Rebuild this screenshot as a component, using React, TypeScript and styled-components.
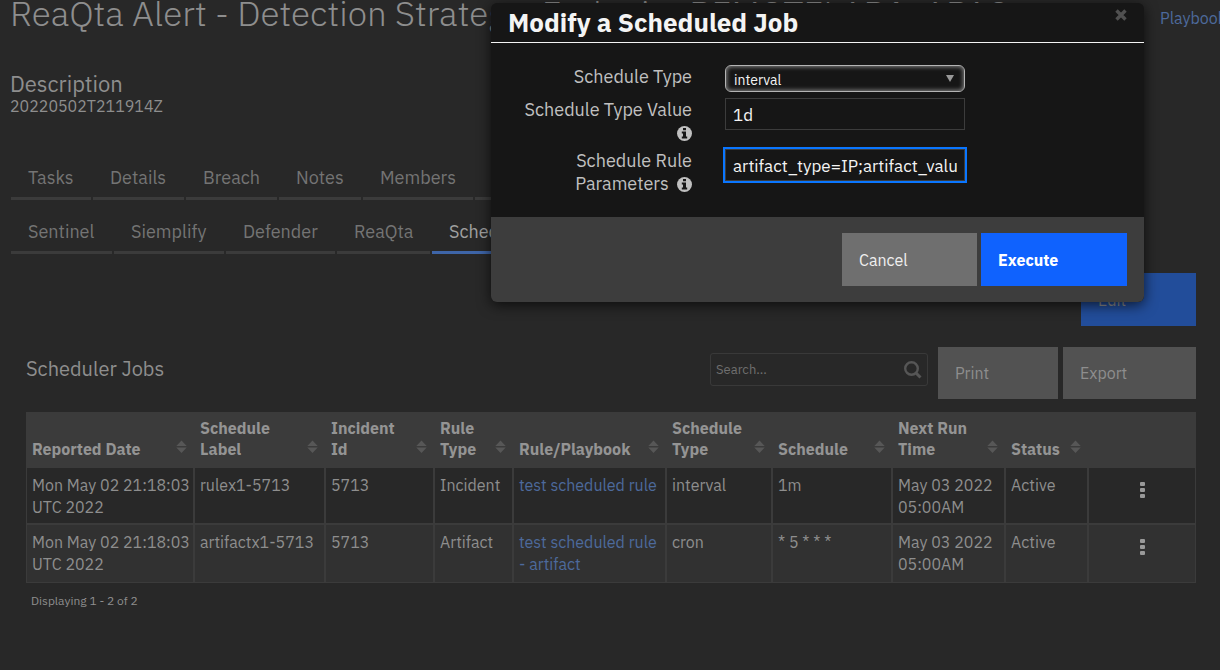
import React, { useState } from "react";
import styled, { createGlobalStyle } from "styled-components";

const GlobalStyle = createGlobalStyle`
  *, *::before, *::after { box-sizing: border-box; }
  html { background: #282828; }
  body {
    margin: 0;
    background: #282828;
    color: #8e8e8e;
    font-family: "IBM Plex Sans", "Noto Sans", "Liberation Sans", sans-serif;
    font-size: 16px;
    line-height: 21px;
  }
  button, input, select { font-family: inherit; }
  h1, h2, h3, p { margin: 0; }
`;

const Page = styled.div`
  position: relative;
  min-height: 100vh;
  overflow: hidden;
`;

const TopBar = styled.header`
  display: flex;
  align-items: flex-start;
  justify-content: space-between;
  gap: 16px;
  height: 72px;
  padding-left: 10px;
  white-space: nowrap;
`;

const Title = styled.h1`
  font-weight: 300;
  font-size: 35px;
  line-height: 26px;
`;

const Link = styled.a`
  color: #4d6a9c;
  text-decoration: none;
`;

const TopLink = styled(Link)`
  flex: none;
  width: 60px;
  padding-top: 8px;
`;

const Description = styled.section`
  padding: 0 10px;
`;

const DescriptionTitle = styled.h2`
  font-weight: 400;
  font-size: 22px;
  line-height: 24px;
`;

const Tabs = styled.nav`
  display: flex;
  gap: 2px;
  padding-left: 11px;
  white-space: nowrap;
`;

const PrimaryTabs = styled(Tabs)`
  margin-top: 41px;
`;

const Tab = styled.button<{ $width: number; $active?: boolean }>`
  flex: none;
  width: ${(p) => p.$width}px;
  height: 42px;
  padding: 0 17px;
  border: 0;
  border-bottom: 3px solid ${(p) => (p.$active ? "#3e65a8" : "#3b3b3b")};
  background: none;
  color: ${(p) => (p.$active ? "#a0a0a0" : "#747474")};
  font-size: 18px;
  line-height: 24px;
  text-align: left;
`;

const SecondaryTabs = styled(Tabs)`
  margin-top: 12px;
`;

const Content = styled.main`
  padding: 19px 24px 0 26px;
`;

const Actions = styled.div`
  display: flex;
  justify-content: flex-end;
`;

const Button = styled.button<{ $width: number; $tone: "edit" | "muted" | "grey" | "blue" }>`
  width: ${(p) => p.$width}px;
  height: ${(p) => (p.$tone === "muted" ? 52 : 53)}px;
  padding: 0 17px;
  border: 0;
  text-align: left;
  font-size: 16px;
  font-weight: ${(p) => (p.$tone === "blue" ? 700 : 400)};
  background: ${(p) => ({ edit: "#224d9a", muted: "#525252", grey: "#6f6f6f", blue: "#0f62fe" })[p.$tone]};
  color: ${(p) => ({ edit: "#8e8e8e", muted: "#8e8e8e", grey: "#f0f0f0", blue: "#ffffff" })[p.$tone]};
`;

const Toolbar = styled.div`
  display: flex;
  align-items: center;
  margin-top: 21px;
`;

const TableTitle = styled.h2`
  flex: 1;
  padding-bottom: 8px;
  font-weight: 400;
  font-size: 20px;
  line-height: 24px;
`;

const Search = styled.label`
  display: flex;
  align-items: center;
  width: 218px;
  height: 33px;
  margin: 0 10px 7px 0;
  padding: 0 5px;
  border: 1px solid #393939;
  border-radius: 3px;
`;

const SearchInput = styled.input`
  flex: 1;
  min-width: 0;
  padding: 0;
  border: 0;
  outline: 0;
  background: none;
  color: #8e8e8e;
  font-size: 13px;
  &::placeholder { color: #6f6f6f; opacity: 1; }
`;

const ButtonPair = styled.div`
  display: flex;
  gap: 5px;
`;

const Table = styled.table`
  width: 100%;
  margin-top: 13px;
  border: 1px solid #3b3b3b;
  border-collapse: separate;
  border-spacing: 0;
  table-layout: fixed;
`;

const HeadCell = styled.th`
  height: 55px;
  padding: 5px 8px 8px 5px;
  background: #3b3b3b;
  color: #949494;
  font-weight: 700;
  text-align: left;
  vertical-align: bottom;
`;

const HeadLabel = styled.span`
  display: flex;
  align-items: flex-end;
  justify-content: space-between;
  gap: 6px;
`;

const Cell = styled.td`
  height: 57px;
  padding: 6px 0 5px 5px;
  border-right: 2px solid #3b3b3b;
  border-bottom: 2px solid #3b3b3b;
  line-height: 22px;
  vertical-align: top;
  &:last-child { padding-left: 0; border-right: 0; }
  tr:last-child > & { border-bottom: 0; background: #313131; }
`;

const RuleText = styled.div`
  max-width: 140px;
`;

const MenuButton = styled.button`
  display: block;
  margin: 8px auto 0;
  padding: 0;
  border: 0;
  background: none;
  line-height: 0;
`;

const Summary = styled.p`
  padding: 8px 5px;
  font-size: 12px;
  line-height: 20px;
`;

const Dialog = styled.section`
  position: absolute;
  top: 3px;
  left: calc(50% - 119px);
  width: 653px;
  border-radius: 6px;
  overflow: hidden;
  background: #161616;
  color: #c0c0c0;
  box-shadow: 0 3px 14px rgba(0, 0, 0, 0.7);
`;

const DialogHeader = styled.header`
  display: flex;
  align-items: flex-start;
  justify-content: space-between;
  height: 40px;
  padding: 6px 17px 0;
  border-bottom: 1px solid #f4f4f4;
`;

const DialogTitle = styled.h2`
  color: #f4f4f4;
  font-weight: 700;
  font-size: 26px;
  line-height: 26px;
`;

const CloseButton = styled.button`
  padding: 0;
  border: 0;
  background: none;
  line-height: 0;
`;

const Form = styled.form`
  display: flex;
  flex-direction: column;
  gap: 5px;
  padding: 22px 17px;
`;

const FieldRow = styled.div`
  display: grid;
  grid-template-columns: 184px 240px;
  column-gap: 33px;
  align-items: start;
`;

const FieldLabel = styled.label`
  font-size: 18px;
  line-height: 23px;
  text-align: right;
`;

const SelectBox = styled.div`
  position: relative;
  height: 28px;
`;

const Select = styled.select`
  display: block;
  width: 240px;
  height: 27px;
  padding: 2px 8px 0;
  appearance: none;
  border: 1px solid #b4b4b4;
  border-radius: 6px;
  outline: 0;
  background: #161616;
  box-shadow: inset 0 0 4px 1px #808080;
  color: #f4f4f4;
  font-size: 14px;
`;

const SelectArrow = styled.svg`
  position: absolute;
  top: 10px;
  right: 11px;
  pointer-events: none;
`;

const TextInput = styled.input<{ $focused?: boolean }>`
  width: 240px;
  height: 32px;
  padding: 1px 7px 0;
  border: 1px solid #3c3c3c;
  border-radius: 0;
  outline: ${(p) => (p.$focused ? "2px solid #0a76ff" : "none")};
  background: #161616;
  color: #f4f4f4;
  font-size: 17px;
`;

const InfoIcon = styled.svg`
  margin-left: 4px;
  vertical-align: -2px;
`;

const DialogFooter = styled.footer`
  display: flex;
  justify-content: flex-end;
  gap: 4px;
  padding: 16px 17px;
  background: #3d3d3d;
`;

const SortMark = styled.svg`
  flex: none;
`;

function Info() {
  return (
    <InfoIcon width="15" height="15" viewBox="0 0 15 15" aria-hidden="true">
      <circle cx="7.5" cy="7.5" r="7.5" fill="#c0c0c0" />
      <path d="M6 2h3v2.2H6zM4.8 5.6H9v5h1.2v1.9H4.8v-1.9H6V7.5H4.8z" fill="#161616" />
    </InfoIcon>
  );
}

function SortIcon() {
  return (
    <SortMark width="11" height="21" viewBox="0 0 11 21" aria-hidden="true">
      <path d="M5.5 1.5 10.7 7H.3zM.3 8.5h10.4L5.5 14z" fill="#575757" />
    </SortMark>
  );
}

const primaryTabs = [
  { label: "Tasks", width: 80 },
  { label: "Details", width: 91 },
  { label: "Breach", width: 91 },
  { label: "Notes", width: 82 },
  { label: "Members", width: 110 },
  { label: "News Feed", width: 120 },
];

const secondaryTabs = [
  { label: "Sentinel", width: 101 },
  { label: "Siemplify", width: 110 },
  { label: "Defender", width: 109 },
  { label: "ReaQta", width: 93 },
  { label: "Scheduler", width: 120 },
];

const columns = [
  { label: "Reported Date", width: 168 },
  { label: "Schedule Label", width: 131 },
  { label: "Incident Id", width: 109 },
  { label: "Rule Type", width: 79 },
  { label: "Rule/Playbook", width: 153 },
  { label: "Schedule Type", width: 106 },
  { label: "Schedule", width: 120 },
  { label: "Next Run Time", width: 113 },
  { label: "Status", width: 83 },
];

const jobs = [
  { date: "Mon May 02 21:18:03 UTC 2022", label: "rulex1-5713", id: "5713", kind: "Incident", rule: "test scheduled rule", type: "interval", schedule: "1m", next: "May 03 2022 05:00AM", status: "Active" },
  { date: "Mon May 02 21:18:03 UTC 2022", label: "artifactx1-5713", id: "5713", kind: "Artifact", rule: "test scheduled rule - artifact", type: "cron", schedule: "* 5 * * *", next: "May 03 2022 05:00AM", status: "Active" },
];

export default function App() {
  const [value, setValue] = useState("1d");
  const [params, setParams] = useState("artifact_type=IP;artifact_value=10.0.0.1");
  return (
    <Page>
      <GlobalStyle />
      <TopBar>
        <Title>ReaQta Alert - Detection Strategy: Endpoint REMOTELAB1, APAC</Title>
        <TopLink href="#playbooks">Playbooks</TopLink>
      </TopBar>
      <Description>
        <DescriptionTitle>Description</DescriptionTitle>
        <p>20220502T211914Z</p>
      </Description>
      <PrimaryTabs>
        {primaryTabs.map((t) => (
          <Tab key={t.label} $width={t.width}>{t.label}</Tab>
        ))}
      </PrimaryTabs>
      <SecondaryTabs>
        {secondaryTabs.map((t) => (
          <Tab key={t.label} $width={t.width} $active={t.label === "Scheduler"}>{t.label}</Tab>
        ))}
      </SecondaryTabs>
      <Content>
        <Actions>
          <Button $width={115} $tone="edit">Edit</Button>
        </Actions>
        <Toolbar>
          <TableTitle>Scheduler Jobs</TableTitle>
          <Search>
            <SearchInput type="search" placeholder="Search..." aria-label="Search jobs" />
            <svg width="19" height="19" viewBox="0 0 19 19" fill="none" stroke="#565656" strokeWidth="2.4" aria-hidden="true">
              <circle cx="8.5" cy="8.5" r="6.3" />
              <path d="m13 13 4.5 4.5" strokeWidth="3" />
            </svg>
          </Search>
          <ButtonPair>
            <Button $width={120} $tone="muted">Print</Button>
            <Button $width={133} $tone="muted">Export</Button>
          </ButtonPair>
        </Toolbar>
        <Table>
          <colgroup>
            {columns.map((c) => (
              <col key={c.label} width={c.width} />
            ))}
            <col />
          </colgroup>
          <thead>
            <tr>
              {columns.map((c) => (
                <HeadCell key={c.label} scope="col">
                  <HeadLabel>{c.label}<SortIcon /></HeadLabel>
                </HeadCell>
              ))}
              <HeadCell aria-label="Actions" />
            </tr>
          </thead>
          <tbody>
            {jobs.map((j) => (
              <tr key={j.label}>
                <Cell>{j.date}</Cell>
                <Cell>{j.label}</Cell>
                <Cell>{j.id}</Cell>
                <Cell>{j.kind}</Cell>
                <Cell><RuleText><Link href="#rule">{j.rule}</Link></RuleText></Cell>
                <Cell>{j.type}</Cell>
                <Cell>{j.schedule}</Cell>
                <Cell>{j.next}</Cell>
                <Cell>{j.status}</Cell>
                <Cell>
                  <MenuButton aria-label="Row menu">
                    <svg width="5" height="16" viewBox="0 0 5 16" fill="#999999" aria-hidden="true">
                      <rect width="5" height="4" rx="1" />
                      <rect y="6" width="5" height="4" rx="1" />
                      <rect y="12" width="5" height="4" rx="1" />
                    </svg>
                  </MenuButton>
                </Cell>
              </tr>
            ))}
          </tbody>
        </Table>
        <Summary>Displaying 1 - 2 of 2</Summary>
      </Content>

      <Dialog role="dialog" aria-labelledby="dialog-title">
        <DialogHeader>
          <DialogTitle id="dialog-title">Modify a Scheduled Job</DialogTitle>
          <CloseButton aria-label="Close">
            <svg width="12" height="12" viewBox="0 0 12 12" stroke="#505050" strokeWidth="3.4" aria-hidden="true">
              <path d="m1.5 1.5 9 9m0-9-9 9" />
            </svg>
          </CloseButton>
        </DialogHeader>
        <Form id="job-form">
          <FieldRow>
            <FieldLabel htmlFor="type">Schedule Type</FieldLabel>
            <SelectBox>
              <Select id="type" defaultValue="interval">
                <option>interval</option>
                <option>cron</option>
              </Select>
              <SelectArrow width="8" height="7" viewBox="0 0 8 7" aria-hidden="true">
                <path d="M0 0h8L4 7z" fill="#999999" />
              </SelectArrow>
            </SelectBox>
          </FieldRow>
          <FieldRow>
            <FieldLabel htmlFor="value">Schedule Type Value <Info /></FieldLabel>
            <TextInput id="value" value={value} onChange={(e) => setValue(e.target.value)} />
          </FieldRow>
          <FieldRow>
            <FieldLabel htmlFor="params">Schedule Rule Parameters <Info /></FieldLabel>
            <TextInput id="params" $focused value={params} onChange={(e) => setParams(e.target.value)} />
          </FieldRow>
        </Form>
        <DialogFooter>
          <Button $width={135} $tone="grey">Cancel</Button>
          <Button $width={146} $tone="blue" type="submit" form="job-form">Execute</Button>
        </DialogFooter>
      </Dialog>
    </Page>
  );
}
